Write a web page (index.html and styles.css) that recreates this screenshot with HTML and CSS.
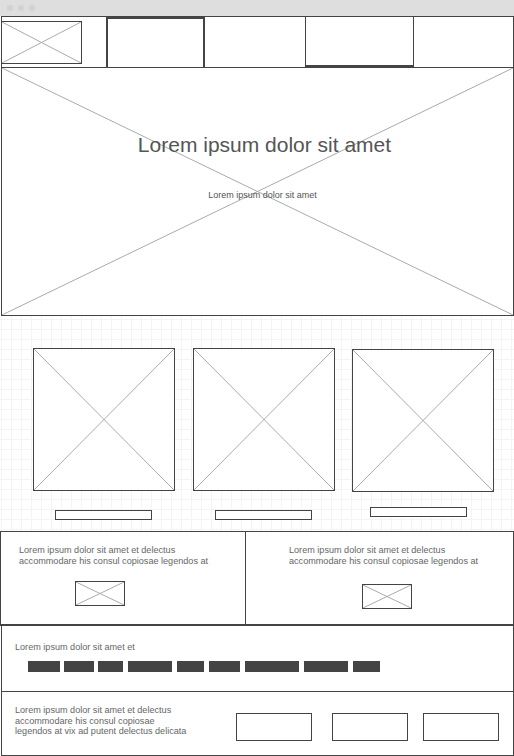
FILE: index.html
```html
<!DOCTYPE html>
<html>
<head>
<meta charset="utf-8">
<link rel="stylesheet" href="styles.css">
</head>
<body>
<div class="browser-bar">
  <span class="dot"></span><span class="dot"></span><span class="dot"></span>
</div>
<div class="page">
  <nav class="nav">
    <div class="nav-logo">
      <div class="ph logo-ph"><svg viewBox="0 0 100 100" preserveAspectRatio="none"><line x1="0" y1="0" x2="100" y2="100"/><line x1="100" y1="0" x2="0" y2="100"/></svg></div>
    </div>
    <div class="nav-item n2"></div>
    <div class="nav-item n3"></div>
    <div class="nav-item n4"></div>
    <div class="nav-item n5"></div>
  </nav>

  <section class="hero ph">
    <svg viewBox="0 0 100 100" preserveAspectRatio="none"><line x1="0" y1="0" x2="100" y2="100"/><line x1="100" y1="0" x2="0" y2="100"/></svg>
    <h1 class="hero-title">Lorem ipsum dolor sit amet</h1>
    <p class="hero-sub">Lorem ipsum dolor sit amet</p>
  </section>

  <section class="gallery">
    <div class="card">
      <div class="ph square"><svg viewBox="0 0 100 100" preserveAspectRatio="none"><line x1="0" y1="0" x2="100" y2="100"/><line x1="100" y1="0" x2="0" y2="100"/></svg></div>
      <div class="caption"></div>
    </div>
    <div class="card">
      <div class="ph square"><svg viewBox="0 0 100 100" preserveAspectRatio="none"><line x1="0" y1="0" x2="100" y2="100"/><line x1="100" y1="0" x2="0" y2="100"/></svg></div>
      <div class="caption"></div>
    </div>
    <div class="card c3">
      <div class="ph square"><svg viewBox="0 0 100 100" preserveAspectRatio="none"><line x1="0" y1="0" x2="100" y2="100"/><line x1="100" y1="0" x2="0" y2="100"/></svg></div>
      <div class="caption"></div>
    </div>
  </section>

  <section class="twocol">
    <div class="col left">
      <p class="txt">Lorem ipsum dolor sit amet et delectus<br>accommodare his consul copiosae legendos at</p>
      <div class="ph small-ph"><svg viewBox="0 0 100 100" preserveAspectRatio="none"><line x1="0" y1="0" x2="100" y2="100"/><line x1="100" y1="0" x2="0" y2="100"/></svg></div>
    </div>
    <div class="col right">
      <p class="txt">Lorem ipsum dolor sit amet et delectus<br>accommodare his consul copiosae legendos at</p>
      <div class="ph small-ph"><svg viewBox="0 0 100 100" preserveAspectRatio="none"><line x1="0" y1="0" x2="100" y2="100"/><line x1="100" y1="0" x2="0" y2="100"/></svg></div>
    </div>
  </section>

  <section class="tags">
    <p class="txt">Lorem ipsum dolor sit amet et</p>
    <div class="tag-row">
      <span class="tag" style="width:32px"></span>
      <span class="tag" style="width:30px"></span>
      <span class="tag" style="width:25px"></span>
      <span class="tag" style="width:44px"></span>
      <span class="tag" style="width:27px"></span>
      <span class="tag" style="width:31px"></span>
      <span class="tag" style="width:54px"></span>
      <span class="tag" style="width:44px"></span>
      <span class="tag" style="width:27px"></span>
    </div>
  </section>

  <section class="footer">
    <p class="txt footer-txt">Lorem ipsum dolor sit amet et delectus<br>accommodare his consul copiosae<br>legendos at vix ad putent delectus delicata</p>
    <div class="fbox b1"></div>
    <div class="fbox b2"></div>
    <div class="fbox b3"></div>
  </section>
</div>
</body>
</html>
```

FILE: styles.css
```css
* { box-sizing: border-box; }
html, body { margin: 0; padding: 0; background: #fff; }
body {
  font-family: "Liberation Sans", Arial, sans-serif;
  color: #666;
  width: 514px;
  overflow: hidden;
}

.browser-bar {
  height: 16px;
  background: #dedede;
  display: flex;
  align-items: center;
  gap: 5px;
  padding-left: 7px;
}
.dot {
  width: 6px;
  height: 6px;
  border-radius: 50%;
  background: #d2d2d2;
}

.page { width: 514px; }

.ph { position: relative; border: 1px solid #444; background: #fff; }
.ph svg {
  position: absolute;
  inset: 0;
  width: 100%;
  height: 100%;
  display: block;
}
.ph svg line { stroke: #aaa; stroke-width: 1; vector-effect: non-scaling-stroke; }

/* NAV */
.nav {
  height: 51px;
  margin-left: 1px;
  border: 1px solid #444;
  border-bottom: none;
  display: flex;
}
.nav-logo { width: 104px; padding: 4px 0 0 0; }
.logo-ph { width: 81px; height: 43px; margin-left: -1px; }
.nav-item { border-left: 1px solid #444; }
.n2 { width: 99px; border: 2px solid #444; border-bottom: none; }
.n3 { width: 100px; border-left: none; }
.n4 { width: 108px; border-bottom: 2px solid #444; height: 51px; margin-top: -1px; border-top: 1px solid #444; }
.n5 { flex: 1; }

/* HERO */
.hero {
  margin-left: 1px;
  height: 249px;
  text-align: center;
}
.hero-title {
  position: relative;
  margin: 0;
  padding: 64px 0 0 14px;
  font-weight: normal;
  font-size: 21px;
  line-height: 25px;
  color: #555;
}
.hero-sub {
  position: relative;
  margin: 32px 0 0 0;
  padding-left: 10px;
  font-size: 9px;
  line-height: 12px;
  color: #555;
}

/* GALLERY */
.gallery {
  height: 215px;
  background-color: #fff;
  background-image:
    linear-gradient(to right, #f4f4f4 1px, transparent 1px),
    linear-gradient(to bottom, #f4f4f4 1px, transparent 1px);
  background-size: 10px 10px;
  background-position: 1px 3px;
  display: flex;
  padding: 32px 0 0 33px;
  gap: 18px;
}
.card { width: 142px; display: flex; flex-direction: column; align-items: center; }
.c3 { margin-left: -1px; padding-top: 1px; }
.square { width: 142px; height: 143px; }
.caption {
  width: 97px;
  height: 10px;
  border: 1px solid #444;
  background: #fff;
  margin-top: 19px;
  margin-left: -2px;
}
.c3 .caption { margin-top: 15px; margin-left: -10px; }

/* TWO COL */
.twocol {
  height: 95px;
  border: 1px solid #444;
  border-bottom-width: 2px;
  display: flex;
}
.col { height: 100%; }
.col.left { width: 245px; border-right: 1px solid #444; padding: 13px 0 0 18px; }
.col.right { flex: 1; padding: 13px 0 0 43px; }
.txt {
  margin: 0;
  font-size: 9.1px;
  line-height: 10.5px;
  color: #666;
}
.small-ph { width: 50px; height: 25px; }
.left .small-ph { margin: 15px 0 0 56px; }
.right .small-ph { margin: 18px 0 0 73px; }

/* TAGS */
.tags {
  height: 66px;
  margin-left: 1px;
  border-left: 1px solid #444;
  border-right: 1px solid #444;
  border-bottom: 1px solid #444;
  padding: 16px 0 0 13px;
}
.tag-row { display: flex; gap: 4px; margin: 8px 0 0 13px; }
.tag { display: block; height: 11px; background: #444; }
.tag:nth-child(n+4) { margin-left: 1px; }

/* FOOTER */
.footer {
  height: 64px;
  margin-left: 1px;
  border-left: 1px solid #444;
  border-right: 1px solid #444;
  border-bottom: 1px solid #444;
  display: flex;
  align-items: flex-start;
  padding: 13px 0 0 13px;
}
.footer-txt { width: 210px; }
.fbox { width: 76px; height: 28px; border: 1px solid #444; margin-top: 8px; }
.b1 { margin-left: 11px; }
.b2 { margin-left: 20px; }
.b3 { margin-left: 15px; }
```
